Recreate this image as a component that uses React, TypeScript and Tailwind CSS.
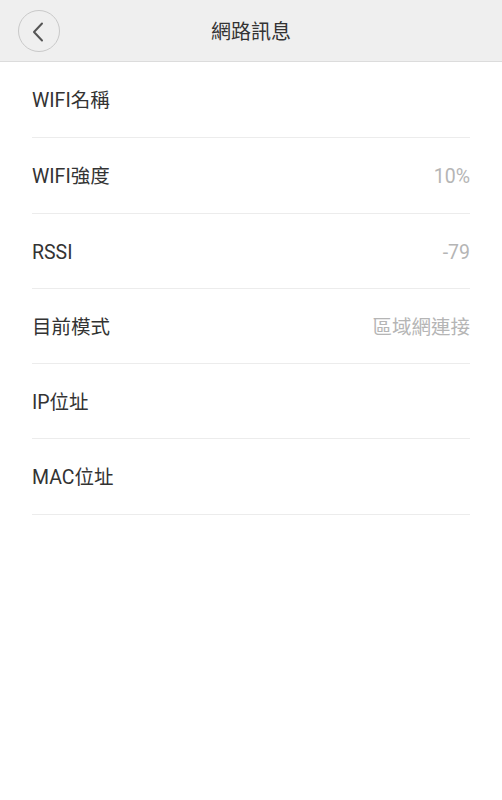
const rows: { label: string; value?: string; h: string }[] = [
  { label: 'WIFI名稱', h: 'h-[76px]' },
  { label: 'WIFI強度', value: '10%', h: 'h-[76px]' },
  { label: 'RSSI', value: '-79', h: 'h-[75px]' },
  { label: '目前模式', value: '區域網連接', h: 'h-[75px]' },
  { label: 'IP位址', h: 'h-[75px]' },
  { label: 'MAC位址', h: 'h-[76px]' },
];

const font = { fontFamily: 'Roboto, "Noto Sans CJK TC", sans-serif' };

export default function App() {
  return (
    <div className="w-[502px] h-[800px] bg-white" style={font}>
      <div className="relative h-[62px] bg-[#efefef] border-b border-[#dcdcdc] flex items-center justify-center">
        <button className="absolute left-[18px] top-[10px] w-[42px] h-[42px] rounded-full border border-[#c9c9c9] flex items-center justify-center">
          <svg width="12" height="20" viewBox="0 0 12 20" className="-ml-[3px] mt-[1px]">
            <path d="M10 1.5 L2 10 L10 18.5" fill="none" stroke="#555" strokeWidth="2" strokeLinecap="round" strokeLinejoin="round" />
          </svg>
        </button>
        <h1 className="text-[20px] text-[#333] font-normal mt-[2px]">網路訊息</h1>
      </div>

      <div className="px-8">
        {rows.map((row) => (
          <div
            key={row.label}
            className={`${row.h} border-b border-[#ececec] flex items-center justify-between pt-[3px]`}
          >
            <span className="text-[19.5px] text-[#333]">{row.label}</span>
            {row.value && (
              <span className="text-[19.5px] text-[#b5b5b5]">{row.value}</span>
            )}
          </div>
        ))}
      </div>
    </div>
  );
}
